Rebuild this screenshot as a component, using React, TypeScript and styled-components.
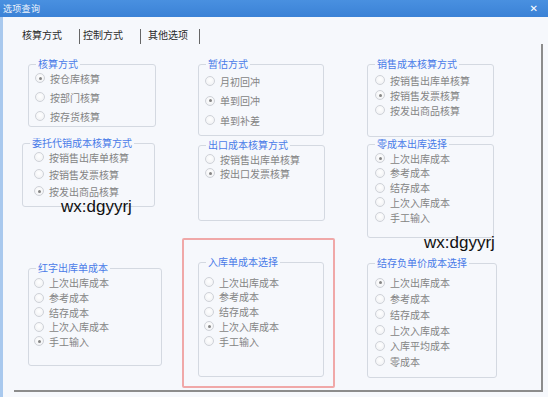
import React from "react";
import styled, { createGlobalStyle } from "styled-components";

const BG = "#f6f8fc";

const GlobalStyle = createGlobalStyle`
  html, body { margin: 0; padding: 0; background: ${BG}; }
  body { font-family: "Noto Sans CJK SC", "Noto Sans", sans-serif; }
  * { box-sizing: border-box; }
`;

const Window = styled.div`
  position: relative;
  width: 548px;
  height: 397px;
  display: flex;
  flex-direction: column;
  background: ${BG};
  overflow: hidden;
`;

const TitleBar = styled.div`
  height: 17px;
  flex: none;
  display: flex;
  align-items: center;
  justify-content: space-between;
  padding: 0 10px 0 3px;
  background: linear-gradient(#4990e0, #3b82d6);
  color: #fff;
`;

const Title = styled.span`
  font-size: 9px;
  line-height: 17px;
  letter-spacing: 0.3px;
  color: #eef4fc;
`;

const Close = styled.span`
  font-family: "DejaVu Sans", sans-serif;
  font-size: 10px;
  font-weight: bold;
  line-height: 17px;
`;

const Body = styled.div`
  flex: 1;
  display: flex;
  flex-direction: column;
  border-left: 3px solid #a9c9ee;
`;

const TabStrip = styled.div`
  display: flex;
  align-items: center;
  height: 19px;
  margin-top: 8px;
  padding-left: 19px;
`;

const Tab = styled.span<{ $l: number; $r: number }>`
  font-size: 10px;
  line-height: 19px;
  color: #2a2a2a;
  padding: 0 ${(p) => p.$r}px 0 ${(p) => p.$l}px;
  white-space: nowrap;
`;

const Sep = styled.span`
  align-self: flex-end;
  width: 1px;
  height: 15px;
  background: #666;
`;

const Panel = styled.div`
  margin-left: 11px;
  width: 529px;
  height: 348px;
  border-right: 2px solid #8c8c8c;
  border-bottom: 2px solid #8c8c8c;
  display: grid;
  grid-template-columns: 160px 185px 1fr;
  padding: 20px 0 0 8px;
`;

const Column = styled.div`
  display: flex;
  flex-direction: column;
  align-items: flex-start;
`;

const GroupBox = styled.div<{ $ml: number; $mt: number; $w: number; $h: number }>`
  position: relative;
  margin-left: ${(p) => p.$ml}px;
  margin-top: ${(p) => p.$mt}px;
  width: ${(p) => p.$w}px;
  height: ${(p) => p.$h}px;
  flex: none;
  border: 1px solid #d4d9e1;
  border-radius: 3px;
`;

const Legend = styled.span`
  position: absolute;
  top: -7px;
  left: 7px;
  padding: 0 2px;
  background: ${BG};
  font-size: 10px;
  line-height: 12px;
  color: #4a7be8;
  white-space: nowrap;
`;

const Options = styled.div<{ $top: number; $step: number; $pl: number }>`
  display: flex;
  flex-direction: column;
  padding-top: ${(p) => p.$top - 1 - p.$step / 2}px;
  padding-left: ${(p) => p.$pl}px;
  & > * {
    height: ${(p) => p.$step}px;
  }
`;

const Option = styled.div`
  display: flex;
  align-items: center;
  gap: 5px;
  font-size: 10px;
  color: #848484;
  white-space: nowrap;
`;

const RadioCircle = styled.span<{ $on: boolean }>`
  width: 10px;
  height: 10px;
  flex: none;
  border-radius: 50%;
  border: 1px solid #cfd2d8;
  background: radial-gradient(circle at 50% 40%, #ffffff 0%, #f3f4f6 70%, #e8eaed 100%);
  display: flex;
  align-items: center;
  justify-content: center;
  &::after {
    content: "";
    width: 3px;
    height: 3px;
    border-radius: 50%;
    background: ${(p) => (p.$on ? "#858585" : "transparent")};
  }
`;

const RedFrame = styled.div<{ $mt: number }>`
  margin-top: ${(p) => p.$mt}px;
  width: 153px;
  height: 150px;
  flex: none;
  border: 2px solid #f0a8a8;
  border-radius: 2px;
  padding: 22px 0 0 14px;
`;

const Watermark = styled.span<{ $x: number; $y: number }>`
  position: absolute;
  left: ${(p) => p.$x}px;
  top: ${(p) => p.$y}px;
  font-family: "Liberation Sans", Arial, sans-serif;
  font-size: 17px;
  line-height: 17px;
  color: #111;
`;

type GroupProps = {
  title: string;
  items: string[];
  selected: number;
  ml?: number;
  mt?: number;
  w: number;
  h: number;
  top: number;
  step: number;
  pl: number;
};

function Group({ title, items, selected, ml = 0, mt = 0, w, h, top, step, pl }: GroupProps) {
  return (
    <GroupBox $ml={ml} $mt={mt} $w={w} $h={h}>
      <Legend>{title}</Legend>
      <Options $top={top} $step={step} $pl={pl}>
        {items.map((t, i) => (
          <Option key={t + i}>
            <RadioCircle $on={i === selected} />
            <span>{t}</span>
          </Option>
        ))}
      </Options>
    </GroupBox>
  );
}

const costItems5 = ["上次出库成本", "参考成本", "结存成本", "上次入库成本", "手工输入"];

export default function App() {
  return (
    <>
      <GlobalStyle />
      <Window>
        <TitleBar>
          <Title>选项查询</Title>
          <Close>✕</Close>
        </TitleBar>
        <Body>
          <TabStrip>
            <Tab $l={0} $r={17}>核算方式</Tab>
            <Sep />
            <Tab $l={3} $r={17}>控制方式</Tab>
            <Sep />
            <Tab $l={7} $r={11}>其他选项</Tab>
            <Sep />
          </TabStrip>
          <Panel>
            <Column>
              <Group
                title="核算方式"
                items={["按仓库核算", "按部门核算", "按存货核算"]}
                selected={0}
                ml={6}
                w={128}
                h={63}
                top={14}
                step={19}
                pl={6}
              />
              <Group
                title="委托代销成本核算方式"
                items={["按销售出库单核算", "按销售发票核算", "按发出商品核算"]}
                selected={2}
                mt={16}
                w={133}
                h={64}
                top={14}
                step={17}
                pl={11}
              />
              <Group
                title="红字出库单成本"
                items={costItems5}
                selected={4}
                ml={6}
                mt={61}
                w={134}
                h={98}
                top={15}
                step={14.6}
                pl={5}
              />
            </Column>
            <Column>
              <Group
                title="暂估方式"
                items={["月初回冲", "单到回冲", "单到补差"]}
                selected={1}
                ml={16}
                w={126}
                h={72}
                top={17}
                step={19.5}
                pl={6}
              />
              <Group
                title="出口成本核算方式"
                items={["按销售出库单核算", "按出口发票核算"]}
                selected={1}
                ml={16}
                mt={9}
                w={127}
                h={76}
                top={14}
                step={14}
                pl={6}
              />
              <RedFrame $mt={17}>
                <Group
                  title="入库单成本选择"
                  items={costItems5}
                  selected={3}
                  w={126}
                  h={115}
                  top={20}
                  step={14.8}
                  pl={5}
                />
              </RedFrame>
            </Column>
            <Column>
              <Group
                title="销售成本核算方式"
                items={["按销售出库单核算", "按销售发票核算", "按发出商品核算"]}
                selected={1}
                w={127}
                h={73}
                top={16}
                step={15}
                pl={7}
              />
              <Group
                title="零成本出库选择"
                items={costItems5}
                selected={0}
                mt={7}
                w={127}
                h={94}
                top={14}
                step={14.75}
                pl={7}
              />
              <Group
                title="结存负单价成本选择"
                items={["上次出库成本", "参考成本", "结存成本", "上次入库成本", "入库平均成本", "零成本"]}
                selected={0}
                mt={25}
                w={130}
                h={115}
                top={20}
                step={15.7}
                pl={7}
              />
            </Column>
          </Panel>
        </Body>
        <Watermark $x={61} $y={198}>wx:dgyyrj</Watermark>
        <Watermark $x={424} $y={234}>wx:dgyyrj</Watermark>
      </Window>
    </>
  );
}
